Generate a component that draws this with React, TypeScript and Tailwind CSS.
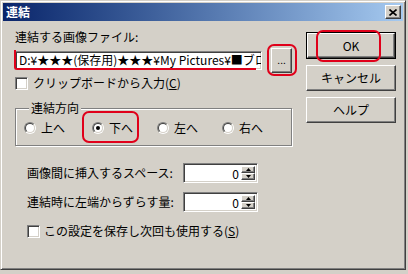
import React from 'react';

const font = { fontFamily: '"Noto Sans CJK JP", "Noto Sans", sans-serif' };

const raised =
  'border border-t-white border-l-white border-b-[#404040] border-r-[#404040] shadow-[inset_-1px_-1px_0_#808080] bg-[#d4d0c8]';
const sunken =
  'border border-t-[#808080] border-l-[#808080] border-b-white border-r-white shadow-[inset_1px_1px_0_#404040,inset_-1px_-1px_0_#d4d0c8] bg-white';

const Radio = ({ checked }: { checked?: boolean }) => (
  <div className="w-[12px] h-[12px] rounded-full border border-t-[#808080] border-l-[#808080] border-b-white border-r-white flex shrink-0">
    <div className="flex-1 rounded-full border border-t-[#404040] border-l-[#404040] border-b-[#d4d0c8] border-r-[#d4d0c8] bg-white flex items-center justify-center">
      {checked && <div className="w-[4px] h-[4px] rounded-full bg-black"></div>}
    </div>
  </div>
);

const Checkbox = () => <div className={`w-[13px] h-[13px] shrink-0 ${sunken}`}></div>;

const Spinner = ({ value }: { value: string }) => (
  <div className={`flex w-[75px] h-[20px] ${sunken} p-[2px]`}>
    <div className="flex-1 text-right pr-[2px] leading-[15px] text-[12px]">{value}</div>
    <div className="flex flex-col w-[14px]">
      <div className={`flex-1 flex items-center justify-center ${raised}`}>
        <svg width="5" height="3" viewBox="0 0 5 3">
          <polygon points="2.5,0 5,3 0,3" fill="#000" />
        </svg>
      </div>
      <div className={`flex-1 flex items-center justify-center ${raised}`}>
        <svg width="5" height="3" viewBox="0 0 5 3">
          <polygon points="0,0 5,0 2.5,3" fill="#000" />
        </svg>
      </div>
    </div>
  </div>
);

const App = () => {
  const radios = [
    { label: '上へ', w: 'w-[68px]' },
    { label: '下へ', w: 'w-[65px]', checked: true },
    { label: '左へ', w: 'w-[65px]' },
    { label: '右へ', w: 'w-[60px]' },
  ];

  return (
    <div className="w-[408px] h-[274px] bg-[#d4d0c8] text-black text-[12px]" style={font}>
      <div className="relative w-[406px] h-[270px] border border-t-[#d4d0c8] border-l-[#d4d0c8] border-b-[#404040] border-r-[#404040] shadow-[inset_1px_1px_0_#fff,inset_-1px_-1px_0_#808080] p-[2px]">
        {/* Title bar */}
        <div className="h-[18px] flex items-center justify-between bg-gradient-to-r from-[#0a246a] to-[#a6caf0] pl-[3px] pr-[2px]">
          <span className="text-white font-bold text-[12px] leading-[14px]">連結</span>
          <div className={`w-[16px] h-[14px] flex items-center justify-center ${raised}`}>
            <svg width="8" height="7" viewBox="0 0 8 7">
              <path d="M0.5 0.5 L7.5 6.5 M7.5 0.5 L0.5 6.5" stroke="#000" strokeWidth="1.6" />
            </svg>
          </div>
        </div>

        {/* Body */}
        <div className="flex pl-[12px] pt-[9px]">
          <div className="w-[277px] flex flex-col">
            <div className="h-[14px] leading-[14px]">連結する画像ファイル:</div>
            <div className="mt-[4px] h-[24px] flex items-center">
              <div className={`w-[248px] h-[19px] ${sunken} px-[3px] overflow-hidden whitespace-nowrap leading-[15px]`}>
                D:¥★★★(保存用)★★★¥My Pictures¥■ブロ
              </div>
              <div className={`ml-[9px] w-[21px] h-[25px] flex items-center justify-center ${raised}`}>
                <span className="text-[10px] leading-none">...</span>
              </div>
            </div>
            <div className="mt-[4px] h-[14px] flex items-center gap-[5px]">
              <Checkbox />
              <span className="leading-[14px]">
                クリップボードから入力(<span className="underline">C</span>)
              </span>
            </div>

            <fieldset className="mt-[11px] w-[277px] border border-[#808080] shadow-[inset_1px_1px_0_#fff,1px_1px_0_#fff] pl-[8px] pt-[6px] pb-[10px]">
              <legend className="ml-[5px] px-[2px] leading-[14px] bg-[#d4d0c8]">連結方向</legend>
              <div className="flex h-[14px] items-center">
                {radios.map((r) => (
                  <div key={r.label} className={`${r.w} flex items-center gap-[5px]`}>
                    <Radio checked={r.checked} />
                    <span className="leading-[14px]">{r.label}</span>
                  </div>
                ))}
              </div>
            </fieldset>

            <div className="mt-[17px] pl-[12px] h-[20px] flex items-center">
              <span className="w-[156px] leading-[14px]">画像間に挿入するスペース:</span>
              <Spinner value="0" />
            </div>
            <div className="mt-[9px] pl-[12px] h-[20px] flex items-center">
              <span className="w-[156px] leading-[14px]">連結時に左端からずらす量:</span>
              <Spinner value="0" />
            </div>
            <div className="mt-[12px] pl-[12px] h-[14px] flex items-center gap-[4px]">
              <Checkbox />
              <span className="leading-[14px]">
                この設定を保存し次回も使用する(<span className="underline">S</span>)
              </span>
            </div>
          </div>

          <div className="ml-[14px] w-[90px] flex flex-col">
            <div className="mt-[2px] h-[27px] border border-black flex">
              <div className={`flex-1 flex items-center justify-center ${raised}`}>OK</div>
            </div>
            <div className={`mt-[6px] h-[26px] flex items-center justify-center ${raised}`}>キャンセル</div>
            <div className={`mt-[6px] h-[26px] flex items-center justify-center ${raised}`}>ヘルプ</div>
          </div>
        </div>

        {/* Red annotation marks */}
        <div className="absolute left-[13px] top-[49px] w-[242px] h-[20px] border-l-2 border-b-2 border-[#e0001a] rounded-bl-[3px]"></div>
        <div className="absolute left-[266px] top-[43px] w-[30px] h-[32px] border-2 border-[#e0001a] rounded-[7px]"></div>
        <div className="absolute left-[315px] top-[29px] w-[65px] h-[32px] border-2 border-[#e0001a] rounded-[7px]"></div>
        <div className="absolute left-[81px] top-[110px] w-[57px] h-[32px] border-2 border-[#e0001a] rounded-[7px]"></div>
      </div>
    </div>
  );
};

export default App;
